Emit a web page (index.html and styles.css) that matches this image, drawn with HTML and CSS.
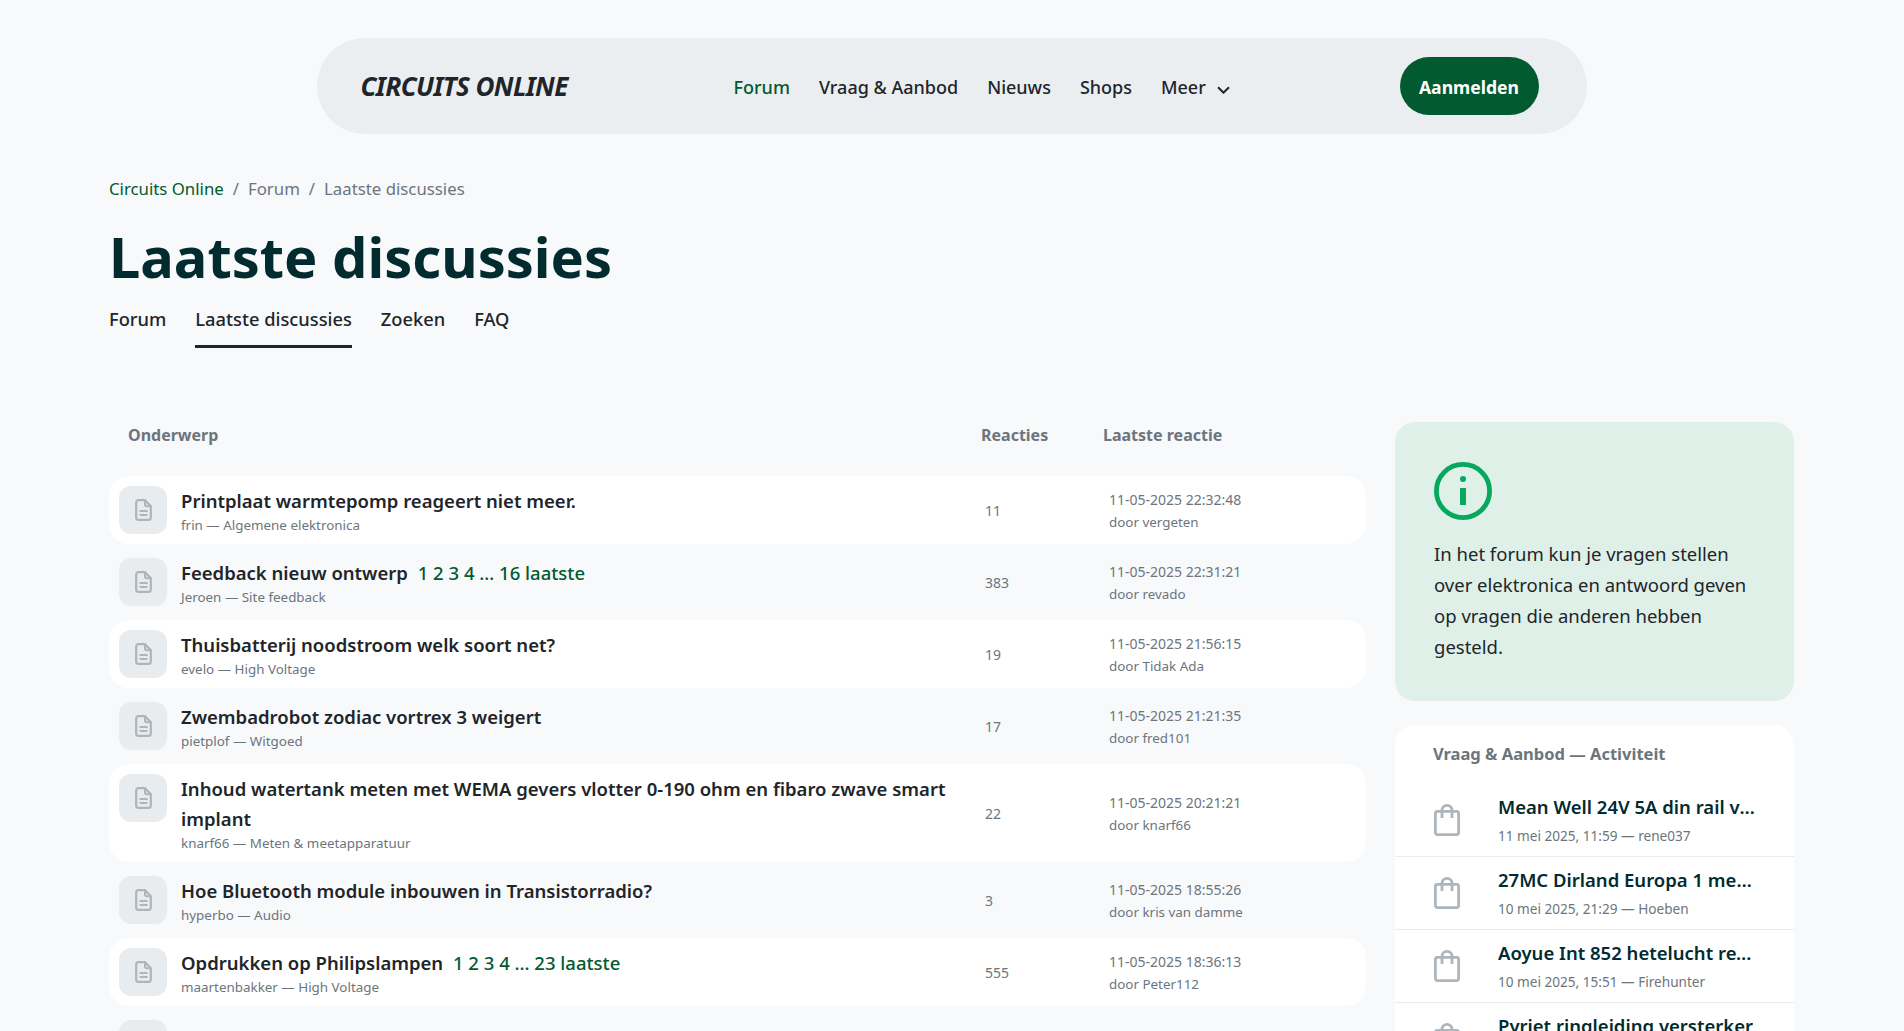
FILE: index.html
```html
<!DOCTYPE html>
<html lang="nl">
<head>
    <meta charset="UTF-8">
    <meta name="viewport" content="width=device-width, initial-scale=1.0">
    <title>Laatste discussies - Circuits Online</title>
    <link rel="stylesheet" href="styles.css">
</head>
<body>
    <svg class="svg-defs" width="0" height="0">
        <symbol id="file-icon" viewBox="0 0 17 22">
            <path d="M1.2 3.2a2 2 0 0 1 2-2H10l5.8 6v11.6a2 2 0 0 1-2 2H3.2a2 2 0 0 1-2-2z" fill="none" stroke="currentColor" stroke-width="2.2"/>
            <path d="M10 1.2v4.3a1.7 1.7 0 0 0 1.7 1.7h4.1" fill="none" stroke="currentColor" stroke-width="2"/>
            <path d="M4.5 12h8M4.5 16h8" fill="none" stroke="currentColor" stroke-width="2"/>
        </symbol>
        <symbol id="bag-icon" viewBox="0 0 26 32">
            <rect x="1.4" y="7.4" width="23.2" height="23.2" rx="2" fill="none" stroke="currentColor" stroke-width="2.8"/>
            <path d="M8 14V6.4a5 5 0 0 1 10 0V14" fill="none" stroke="currentColor" stroke-width="2.8"/>
        </symbol>
    </svg>

    <div class="page">
        <header class="navbar">
            <a class="logo" href="#">CIRCUITS ONLINE</a>
            <nav class="nav-links">
                <a class="active" href="#">Forum</a>
                <a href="#">Vraag &amp; Aanbod</a>
                <a href="#">Nieuws</a>
                <a href="#">Shops</a>
                <a href="#">Meer
                    <svg class="chevron" viewBox="0 0 13 8" width="13" height="8"><path d="M1 1.2l5.5 5.5L12 1.2" fill="none" stroke="currentColor" stroke-width="2"/></svg>
                </a>
            </nav>
            <a class="login-btn" href="#">Aanmelden</a>
        </header>

        <div class="breadcrumb">
            <a href="#">Circuits Online</a>
            <span class="sep">/</span>
            <span>Forum</span>
            <span class="sep">/</span>
            <span>Laatste discussies</span>
        </div>

        <h1>Laatste discussies</h1>

        <div class="tabs">
            <a href="#">Forum</a>
            <a class="active" href="#">Laatste discussies</a>
            <a href="#">Zoeken</a>
            <a href="#">FAQ</a>
        </div>

        <div class="content">
            <main class="topics">
                <!-- kolomkoppen -->
                <div class="topics-head">
                    <span class="col-subject">Onderwerp</span>
                    <span class="col-count">Reacties</span>
                    <span class="col-last">Laatste reactie</span>
                </div>
                <div id="topicList"></div>
            </main>

            <aside class="sidebar">
                <div class="info-card">
                    <svg class="info-icon" viewBox="0 0 58 58" width="58" height="58">
                        <circle cx="29" cy="29" r="26.6" fill="none" stroke="currentColor" stroke-width="4.8"/>
                        <rect x="26" y="26" width="6" height="17" fill="currentColor"/>
                        <circle cx="29" cy="17" r="3" fill="currentColor"/>
                    </svg>
                    <p>In het forum kun je vragen stellen over elektronica en antwoord geven op vragen die anderen hebben gesteld.</p>
                </div>

                <div class="activity-card">
                    <h3>Vraag &amp; Aanbod — Activiteit</h3>
                    <div id="activityList"></div>
                </div>
            </aside>
        </div>
    </div>

    <script src="script.js"></script>
</body>
</html>
```

FILE: styles.css
```css
* {
  margin: 0;
  padding: 0;
  box-sizing: border-box;
}

html,
body {
  height: 100vh;
  overflow: hidden;
}

body {
  background-color: #f8f9fa;
  color: #212529;
  font-family: "Noto Sans", "DejaVu Sans", sans-serif;
}

a {
  color: inherit;
  text-decoration: none;
}

.svg-defs {
  position: absolute;
}

.page {
  padding: 38px 110px 0 109px;
}

.navbar {
  width: 1270px;
  height: 96px;
  margin: 0 auto;
  padding: 0 48px 0 44px;
  display: flex;
  align-items: center;
  background-color: #ebeef1;
  border-radius: 48px;
}

.logo {
  width: 373px;
  font-size: 26px;
  font-weight: 700;
  font-style: italic;
  letter-spacing: -0.6px;
}

.nav-links {
  display: flex;
  gap: 29px;
  font-size: 18px;
  font-weight: 500;
  flex: 1;
  white-space: nowrap;
  padding-top: 2px;
}

.nav-links .active {
  color: #025a30;
}

.chevron {
  margin-left: 7px;
}

.login-btn {
  width: 139px;
  height: 58px;
  padding-top: 2px;
  border-radius: 29px;
  background-color: #025a30;
  color: white;
  font-size: 17.6px;
  font-weight: 700;
  display: flex;
  align-items: center;
  justify-content: center;
}

.breadcrumb {
  margin-top: 43px;
  display: flex;
  gap: 9px;
  font-size: 16.8px;
  color: #6c757d;
  line-height: 24px;
}

.breadcrumb a {
  color: #025a30;
}

h1 {
  margin-top: 20px;
  font-size: 56px;
  font-weight: 700;
  line-height: 70px;
  color: #012b2f;
}

.tabs {
  margin-top: 10px;
  display: flex;
  gap: 29px;
  font-size: 18.3px;
  font-weight: 500;
}

.tabs a {
  height: 47px;
  padding-top: 6px;
  line-height: 24px;
}

.tabs .active {
  border-bottom: 3px solid #212529;
}

.content {
  margin-top: 74px;
  display: grid;
  grid-template-columns: 1257px 399px;
  gap: 29px;
}

.topics-head {
  height: 54px;
  padding-bottom: 28px;
  display: flex;
  align-items: center;
  font-size: 16px;
  font-weight: 700;
  color: #6c757d;
}

.col-subject {
  width: 872px;
  padding-left: 19px;
}

.col-count {
  width: 122px;
}

.topic {
  display: flex;
  align-items: center;
  min-height: 68px;
  margin-bottom: 4px;
  padding: 10px 10px;
  border-radius: 20px;
}

.topic:nth-child(odd) {
  background-color: white;
}

.topic-icon {
  width: 48px;
  height: 48px;
  flex-shrink: 0;
  align-self: flex-start;
  border-radius: 12px;
  background-color: #e9ecef;
  color: #adb5bd;
  display: flex;
  align-items: center;
  justify-content: center;
}

.topic-main {
  width: 802px;
  margin-left: 14px;
  padding-right: 10px;
  flex-shrink: 0;
}

.topic-title {
  font-size: 18.5px;
  font-weight: 600;
  line-height: 30px;
}

.pages {
  margin-left: 5px;
  font-weight: 500;
  color: #025a30;
}

.topic-sub {
  font-size: 13.4px;
  line-height: 18px;
  color: #6c757d;
}

.topic-count {
  width: 126px;
  font-size: 14px;
  color: #6c757d;
  padding-left: 2px;
}

.topic-last {
  margin-top: 1px;
  font-size: 14px;
  line-height: 22px;
  color: #6c757d;
}

.topic-by {
  font-size: 13.4px;
}

.info-card {
  height: 279px;
  padding: 40px 39px;
  border-radius: 20px;
  background-color: #dff0e9;
}

.info-icon {
  display: block;
  color: #05a85c;
}

.info-card p {
  margin-top: 18px;
  font-size: 18.5px;
  line-height: 31px;
}

.activity-card {
  margin-top: 24px;
  padding-top: 17px;
  border-radius: 20px;
  background-color: white;
  height: 500px;
}

.activity-card h3 {
  padding: 0 38px;
  font-size: 16.5px;
  font-weight: 700;
  line-height: 24px;
  color: #6c757d;
  margin-bottom: 18px;
}

.offer {
  height: 73px;
  padding: 7px 38px 0 39px;
  display: flex;
  border-bottom: 1px solid #e9ecef;
}

.offer-icon {
  margin-top: 13px;
  color: #adb5bd;
  flex-shrink: 0;
}

.offer-text {
  margin-left: 38px;
  min-width: 0;
}

.offer-title {
  font-size: 18.5px;
  font-weight: 600;
  line-height: 32px;
  color: #012b2f;
  white-space: nowrap;
  overflow: hidden;
  text-overflow: ellipsis;
}

.offer-sub {
  font-size: 13.6px;
  line-height: 26px;
  color: #6c757d;
}
```

FILE: script.js
```js
const topics = [
    { title: "Printplaat warmtepomp reageert niet meer.", user: "frin", cat: "Algemene elektronica", count: 11, date: "11-05-2025 22:32:48", by: "vergeten" },
    { title: "Feedback nieuw ontwerp", pages: "1 2 3 4 … 16 laatste", user: "Jeroen", cat: "Site feedback", count: 383, date: "11-05-2025 22:31:21", by: "revado" },
    { title: "Thuisbatterij noodstroom welk soort net?", user: "evelo", cat: "High Voltage", count: 19, date: "11-05-2025 21:56:15", by: "Tidak Ada" },
    { title: "Zwembadrobot zodiac vortrex 3 weigert", user: "pietplof", cat: "Witgoed", count: 17, date: "11-05-2025 21:21:35", by: "fred101" },
    { title: "Inhoud watertank meten met WEMA gevers vlotter 0-190 ohm en fibaro zwave smart implant", user: "knarf66", cat: "Meten & meetapparatuur", count: 22, date: "11-05-2025 20:21:21", by: "knarf66" },
    { title: "Hoe Bluetooth module inbouwen in Transistorradio?", user: "hyperbo", cat: "Audio", count: 3, date: "11-05-2025 18:55:26", by: "kris van damme" },
    { title: "Opdrukken op Philipslampen", pages: "1 2 3 4 … 23 laatste", user: "maartenbakker", cat: "High Voltage", count: 555, date: "11-05-2025 18:36:13", by: "Peter112" },
    { title: "Gasmeter uitlezen thuis", pages: "1 2 3 4 … 9 laatste", date: "11-05-2025 18:30:44" }
];

const offers = [
    { title: "Mean Well 24V 5A din rail voeding", sub: "11 mei 2025, 11:59 — rene037" },
    { title: "27MC Dirland Europa 1 met microfoon", sub: "10 mei 2025, 21:29 — Hoeben" },
    { title: "Aoyue Int 852 hetelucht rework station", sub: "10 mei 2025, 15:51 — Firehunter" },
    { title: "Pyriet ringleiding versterker", sub: "" }
];

const topicList = document.getElementById("topicList");
const activityList = document.getElementById("activityList");

topics.forEach((t) => {
    const row = document.createElement("div");
    row.className = "topic";
    row.innerHTML = `
        <div class="topic-icon"><svg width="17" height="22"><use href="#file-icon"/></svg></div>
        <div class="topic-main">
            <div class="topic-title">${t.title}${t.pages ? `<span class="pages"> ${t.pages}</span>` : ""}</div>
            <div class="topic-sub">${t.user ? `${t.user} — ${t.cat}` : ""}</div>
        </div>
        <div class="topic-count">${t.count || ""}</div>
        <div class="topic-last">${t.date}<br><span class="topic-by">${t.by ? `door ${t.by}` : ""}</span></div>
    `;
    topicList.appendChild(row);
});

offers.forEach((o) => {
    const row = document.createElement("div");
    row.className = "offer";
    row.innerHTML = `
        <svg class="offer-icon" width="26" height="32"><use href="#bag-icon"/></svg>
        <div class="offer-text">
            <div class="offer-title">${o.title}</div>
            <div class="offer-sub">${o.sub}</div>
        </div>
    `;
    activityList.appendChild(row);
});
```
